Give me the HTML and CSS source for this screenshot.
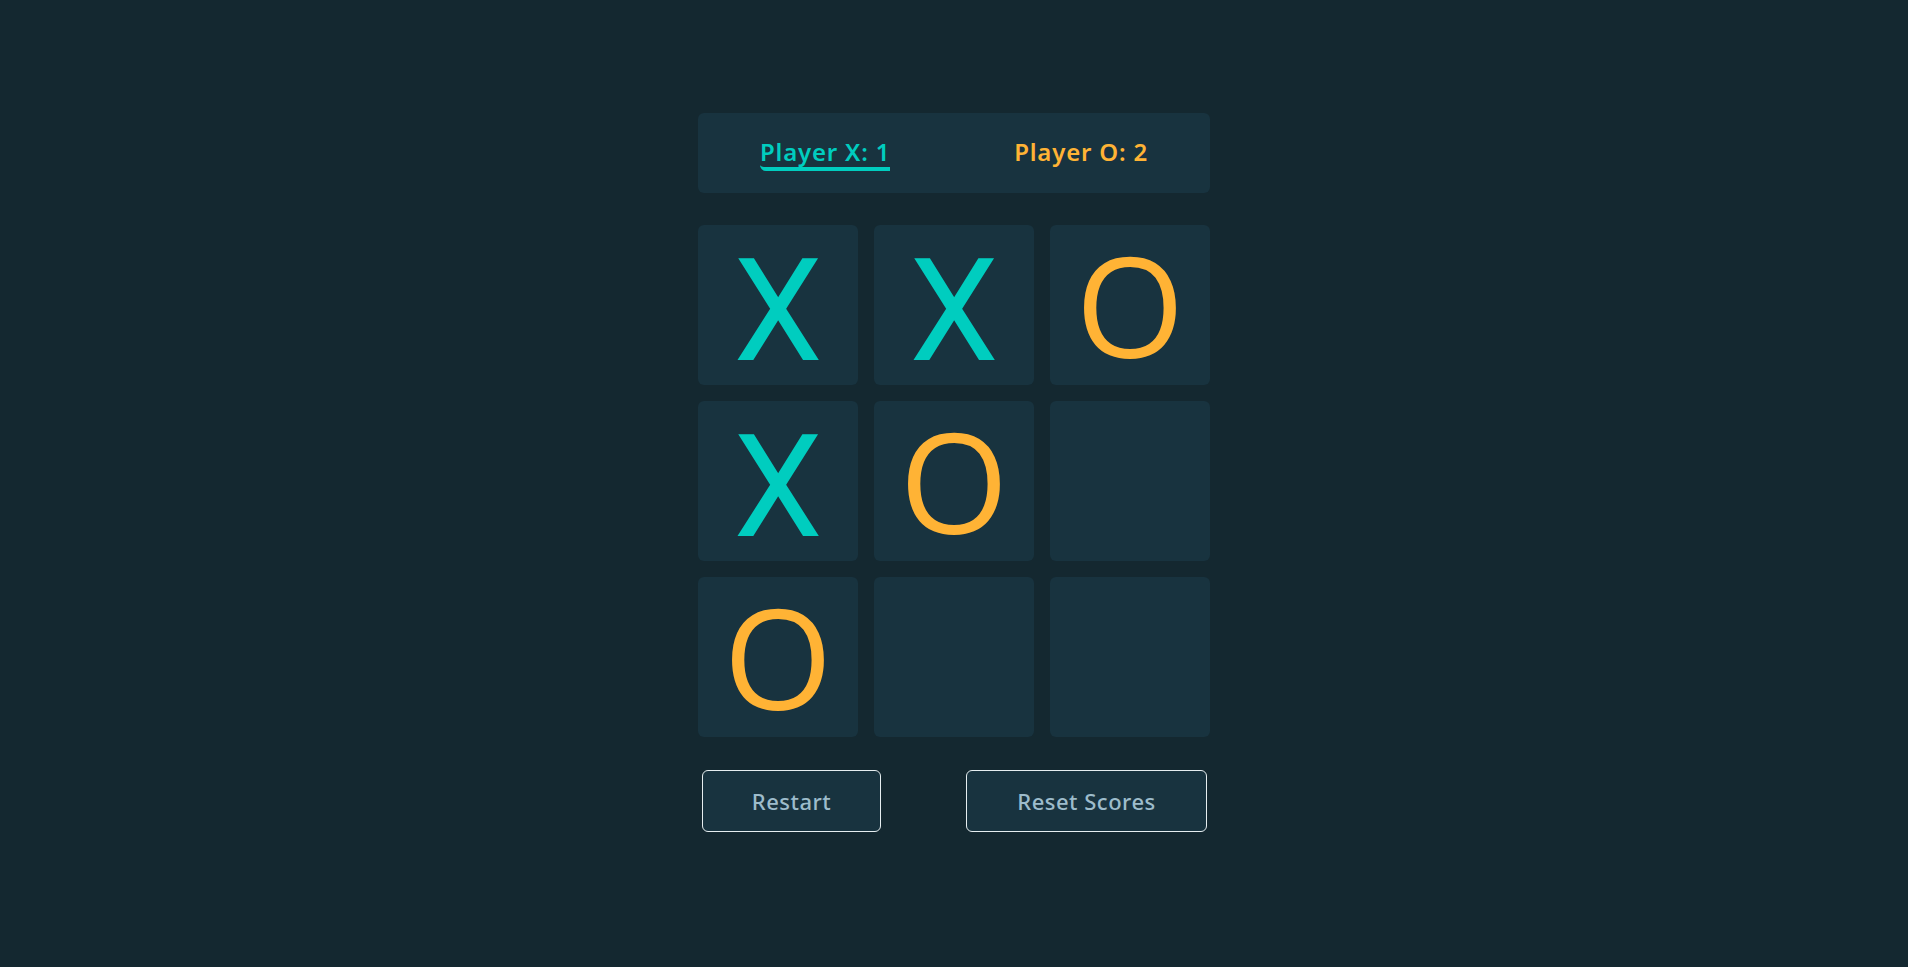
FILE: index.html
```html
<!DOCTYPE html>
<html lang="en">
<head>
<meta charset="utf-8">
<title>Tic Tac Toe</title>
<link rel="stylesheet" href="styles.css">
</head>
<body>
<main class="game">
  <header class="scores">
    <div class="score score-x active">Player X: 1</div>
    <div class="score score-o">Player O: 2</div>
  </header>
  <section class="board">
    <div class="cell x">X</div>
    <div class="cell x">X</div>
    <div class="cell o">O</div>
    <div class="cell x">X</div>
    <div class="cell o">O</div>
    <div class="cell"></div>
    <div class="cell o">O</div>
    <div class="cell"></div>
    <div class="cell"></div>
  </section>
  <footer class="actions">
    <button class="btn btn-restart">Restart</button>
    <button class="btn btn-reset">Reset Scores</button>
  </footer>
</main>
</body>
</html>
```
FILE: styles.css
```css
* { box-sizing: border-box; }
html, body { height: 100%; }
body {
  margin: 0;
  background: #142830;
  font-family: "Noto Sans", "Open Sans", sans-serif;
}
.game {
  width: 512px;
  margin: 0 auto;
  padding-top: 113px;
}
.scores {
  height: 80px;
  background: #18333f;
  border-radius: 6px;
  display: flex;
  justify-content: space-around;
  align-items: center;
}
.score {
  font-size: 24px;
  font-weight: 600;
  line-height: 30px;
  padding-top: 2px;
  border-bottom: 4px solid transparent;
  letter-spacing: 0.8px;
}
.score-x { color: #00cdbf; }
.score-o { color: #ffb335; }
.score.active {
  border-bottom-color: #00cdbf;
  border-bottom-left-radius: 6px;
}
.board {
  margin-top: 32px;
  display: grid;
  grid-template-columns: repeat(3, 1fr);
  grid-template-rows: repeat(3, 160px);
  gap: 16px;
}
.cell {
  background: #18333f;
  border-radius: 6px;
  display: flex;
  align-items: center;
  justify-content: center;
  font-family: "Open Sans", sans-serif;
  font-size: 140px;
  line-height: 1;
  padding-bottom: 2px;
}
.cell.x {
  color: #00cdbf;
  font-family: Roboto, sans-serif;
  font-size: 142px;
  padding-top: 14px;
  padding-bottom: 0;
}
.cell.o { color: #ffb335; }
.actions {
  margin-top: 33px;
  display: flex;
  justify-content: space-between;
  padding: 0 3px 0 4px;
}
.btn {
  height: 62px;
  background: #18333f;
  border: 1px solid #e6eef0;
  border-radius: 6px;
  color: #9dbccb;
  font-family: "Noto Sans", sans-serif;
  font-size: 22px;
  font-weight: 500;
  letter-spacing: 0.5px;
  cursor: pointer;
}
.btn-restart { width: 179px; }
.btn-reset { width: 241px; }
```
